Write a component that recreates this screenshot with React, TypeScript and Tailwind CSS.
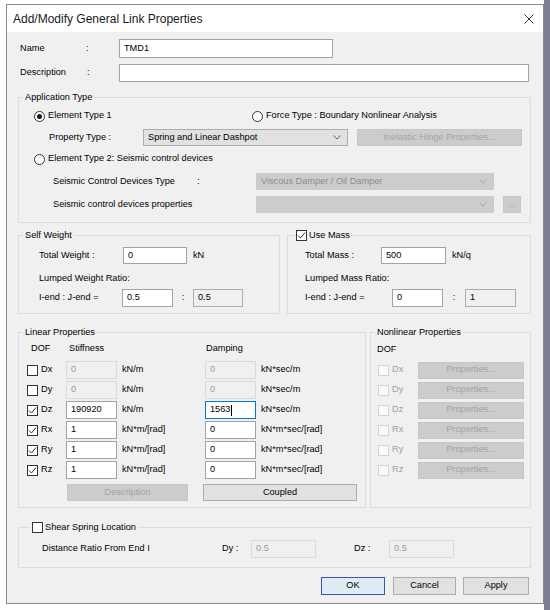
import React from 'react';

type BoxKind = 'normal' | 'readonly' | 'disabled' | 'focus';

function TextBox({ value, className, kind = 'normal' }: { value?: string; className: string; kind?: BoxKind }) {
  const look = {
    normal: 'border-[#a3a3a3] bg-white text-black',
    readonly: 'border-[#adadad] bg-[#f0f0f0] text-black',
    disabled: 'border-[#dadada] bg-[#f0f0f0] text-[#9a9a9a]',
    focus: 'border-[#0078d7] bg-white text-black',
  }[kind];
  return (
    <div className={`flex shrink-0 items-center border px-[4px] ${look} ${className}`}>
      {value}
      {kind === 'focus' && <span className="ml-px h-[11px] w-px bg-black" />}
    </div>
  );
}

function Btn({
  label,
  className,
  disabled,
  primary,
}: {
  label: string;
  className: string;
  disabled?: boolean;
  primary?: boolean;
}) {
  const look = disabled
    ? 'border-[#c6c6c6] bg-[#cccccc] text-[#a4a4a4]'
    : primary
      ? 'border-[#3a55b4] bg-[#e0ecf3] text-black'
      : 'border-[#adadad] bg-[#e1e1e1] text-black';
  return (
    <button type="button" className={`flex shrink-0 items-center justify-center border ${look} ${className}`}>
      {label}
    </button>
  );
}

function Chevron({ disabled }: { disabled?: boolean }) {
  return (
    <svg width="8" height="5" viewBox="0 0 8 5" className="shrink-0">
      <polyline
        points="0.5,0.5 4,4 7.5,0.5"
        fill="none"
        stroke={disabled ? '#a9a9a9' : '#606060'}
        strokeWidth="1"
      />
    </svg>
  );
}

function Combo({ value, className, disabled }: { value?: string; className: string; disabled?: boolean }) {
  return (
    <div
      className={`flex shrink-0 items-center justify-between border pl-[4px] pr-[6px] ${
        disabled ? 'border-[#cccccc] bg-[#cccccc] text-[#8c8c8c]' : 'border-[#adadad] bg-[#e1e1e1] text-black'
      } ${className}`}
    >
      <span>{value}</span>
      <Chevron disabled={disabled} />
    </div>
  );
}

function Check({ checked, disabled }: { checked?: boolean; disabled?: boolean }) {
  return (
    <span
      className={`flex h-[11px] w-[11px] shrink-0 items-center justify-center border ${
        disabled ? 'border-[#d3d3d3] bg-[#fafafa]' : 'border-[#333333] bg-white'
      }`}
    >
      {checked && (
        <svg width="9" height="9" viewBox="0 0 9 9">
          <polyline points="1,4.5 3.5,7 8,1.5" fill="none" stroke="#333333" strokeWidth="1" />
        </svg>
      )}
    </span>
  );
}

function Radio({ checked }: { checked?: boolean }) {
  return (
    <span className="flex h-[11px] w-[11px] shrink-0 items-center justify-center rounded-full border border-[#333333] bg-white">
      {checked && <span className="h-[5px] w-[5px] rounded-full bg-[#1a1a1a]" />}
    </span>
  );
}

function GroupBox({
  title,
  className,
  legendClass = 'ml-[4px] px-[2px]',
  children,
}: {
  title: React.ReactNode;
  className: string;
  legendClass?: string;
  children: React.ReactNode;
}) {
  return (
    <fieldset className={`flex min-w-0 flex-col border border-[#dcdcdc] ${className}`}>
      <legend className={`leading-[12px] ${legendClass}`}>{title}</legend>
      {children}
    </fieldset>
  );
}

const linearRows = [
  { dof: 'Dx', on: false, k: '0', c: '0', ku: 'kN/m', cu: 'kN*sec/m' },
  { dof: 'Dy', on: false, k: '0', c: '0', ku: 'kN/m', cu: 'kN*sec/m' },
  { dof: 'Dz', on: true, k: '190920', c: '1563', ku: 'kN/m', cu: 'kN*sec/m', focus: true },
  { dof: 'Rx', on: true, k: '1', c: '0', ku: 'kN*m/[rad]', cu: 'kN*m*sec/[rad]' },
  { dof: 'Ry', on: true, k: '1', c: '0', ku: 'kN*m/[rad]', cu: 'kN*m*sec/[rad]' },
  { dof: 'Rz', on: true, k: '1', c: '0', ku: 'kN*m/[rad]', cu: 'kN*m*sec/[rad]' },
];

export default function App() {
  return (
    <div className="flex h-[610px] w-[550px] overflow-hidden bg-white font-['Liberation_Sans',Arial,sans-serif] text-[9.2px] leading-none text-black">
      <div className="ml-[6px] mt-[4px] flex h-[600px] w-[538px] shrink-0 flex-col border border-[#8a8a8a] bg-[#f0f0f0]">
        {/* title bar */}
        <div className="flex h-[27px] shrink-0 items-center justify-between bg-white pl-[6px] pr-[9px]">
          <span className="text-[12px] text-[#1a1a1a]">Add/Modify General Link Properties</span>
          <svg width="10" height="10" viewBox="0 0 10 10">
            <path d="M0.5 0.5 L9.5 9.5 M9.5 0.5 L0.5 9.5" stroke="#333333" strokeWidth="1" />
          </svg>
        </div>

        <div className="flex flex-col pl-[11px] pr-[12px]">
          {/* name / description */}
          <div className="mt-[7px] flex h-[19px] items-center">
            <span className="w-[68px] pl-[2px]">Name</span>
            <span className="w-[33px]">:</span>
            <TextBox value="TMD1" className="h-[19px] w-[214px]" />
          </div>
          <div className="mt-[6px] flex h-[18px] items-center">
            <span className="w-[68px] pl-[2px]">Description</span>
            <span className="w-[33px] pl-px">:</span>
            <TextBox className="h-[18px] w-[410px]" />
          </div>

          {/* application type */}
          <GroupBox title="Application Type" className="mt-[9px] pb-[9px]">
            <div className="mt-[5px] flex h-[16px] items-center pl-[15px]">
              <span className="flex w-[218px] items-center gap-[3px]">
                <Radio checked />
                Element Type 1
              </span>
              <span className="flex items-center gap-[3px]">
                <Radio />
                Force Type : Boundary Nonlinear Analysis
              </span>
            </div>
            <div className="mt-[5px] flex h-[17px] items-center pl-[30px]">
              <span className="w-[94px]">Property Type :</span>
              <Combo value="Spring and Linear Dashpot" className="h-[17px] w-[205px]" />
              <Btn label="Inelastic Hinge Properties..." disabled className="ml-[9px] h-[17px] w-[165px]" />
            </div>
            <div className="mt-[5px] flex h-[16px] items-center gap-[3px] pl-[15px]">
              <Radio />
              Element Type 2: Seismic control devices
            </div>
            <div className="mt-[6px] flex h-[17px] items-center pl-[34px]">
              <span className="w-[144px]">Seismic Control Devices Type</span>
              <span className="w-[59px]">:</span>
              <Combo value="Viscous Damper / Oil Damper" disabled className="h-[17px] w-[238px]" />
            </div>
            <div className="mt-[6px] flex h-[17px] items-center pl-[34px]">
              <span className="w-[203px]">Seismic control devices properties</span>
              <Combo disabled className="h-[17px] w-[238px]" />
              <Btn label="..." disabled className="ml-[9px] h-[17px] w-[18px]" />
            </div>
          </GroupBox>

          {/* weight / mass */}
          <div className="mt-[6px] flex gap-[7px]">
            <GroupBox title="Self Weight" className="w-[262px] pb-[6px]">
              <div className="mt-[6px] flex h-[17px] items-center pl-[20px]">
                <span className="w-[84px]">Total Weight :</span>
                <TextBox value="0" className="h-[17px] w-[64px]" />
                <span className="ml-[6px]">kN</span>
              </div>
              <div className="mt-[9px] flex h-[12px] items-center pl-[20px]">Lumped Weight Ratio:</div>
              <div className="mt-[4px] flex h-[18px] items-center pl-[20px]">
                <span className="w-[83px]">I-end : J-end =</span>
                <TextBox value="0.5" className="h-[18px] w-[51px]" />
                <span className="w-[20px] text-center">:</span>
                <TextBox value="0.5" kind="readonly" className="h-[18px] w-[50px]" />
              </div>
            </GroupBox>
            <GroupBox
              title={
                <span className="flex h-[12px] items-center gap-[2px]">
                  <Check checked />
                  Use Mass
                </span>
              }
              legendClass="ml-[7px] px-px"
              className="w-[244px] pb-[6px]"
            >
              <div className="mt-[6px] flex h-[17px] items-center pl-[17px]">
                <span className="w-[76px]">Total Mass :</span>
                <TextBox value="500" className="h-[17px] w-[65px]" />
                <span className="ml-[6px]">kN/q</span>
              </div>
              <div className="mt-[9px] flex h-[12px] items-center pl-[17px]">Lumped Mass Ratio:</div>
              <div className="mt-[4px] flex h-[18px] items-center pl-[17px]">
                <span className="w-[87px]">I-end : J-end =</span>
                <TextBox value="0" className="h-[18px] w-[51px]" />
                <span className="w-[22px] text-center">:</span>
                <TextBox value="1" kind="readonly" className="h-[18px] w-[51px]" />
              </div>
            </GroupBox>
          </div>

          {/* linear / nonlinear */}
          <div className="mt-[12px] flex gap-[4px]">
            <GroupBox title="Linear Properties" className="w-[348px] pb-[6px]">
              <div className="mt-[5px] flex h-[12px] items-center pl-[12px]">
                <span className="w-[38px]">DOF</span>
                <span className="w-[137px]">Stiffness</span>
                <span>Damping</span>
              </div>
              <div className="mt-[6px] flex flex-col gap-[2px]">
                {linearRows.map((r) => (
                  <div key={r.dof} className="flex h-[18px] items-center pl-[8px]">
                    <Check checked={r.on} />
                    <span className="ml-[3px] w-[25px]">{r.dof}</span>
                    <TextBox value={r.k} kind={r.on ? 'normal' : 'disabled'} className="h-[18px] w-[51px]" />
                    <span className="w-[88px] pl-[5px]">{r.ku}</span>
                    <TextBox
                      value={r.c}
                      kind={r.focus ? 'focus' : r.on ? 'normal' : 'disabled'}
                      className="h-[18px] w-[51px]"
                    />
                    <span className="pl-[5px]">{r.cu}</span>
                  </div>
                ))}
              </div>
              <div className="mt-[5px] flex h-[17px] items-center pl-[48px]">
                <Btn label="Description" disabled className="h-[17px] w-[121px]" />
                <Btn label="Coupled" className="ml-[15px] h-[17px] w-[154px]" />
              </div>
            </GroupBox>
            <GroupBox title="Nonlinear Properties" className="flex-1 pb-[6px]">
              <div className="mt-[6px] flex h-[12px] items-center pl-[6px]">DOF</div>
              <div className="mt-[5px] flex flex-col gap-[2px]">
                {linearRows.map((r) => (
                  <div key={r.dof} className="flex h-[18px] items-center pl-[7px] text-[#a0a0a0]">
                    <Check disabled />
                    <span className="ml-[3px] w-[26px]">{r.dof}</span>
                    <Btn label="Properties..." disabled className="h-[17px] w-[106px]" />
                  </div>
                ))}
              </div>
            </GroupBox>
          </div>

          {/* shear spring */}
          <GroupBox
            title={
              <span className="flex h-[12px] items-center gap-[2px]">
                <Check />
                Shear Spring Location
              </span>
            }
            legendClass="ml-[11px] px-[2px]"
            className="mt-[13px] pb-[9px]"
          >
            <div className="mt-[7px] flex h-[18px] items-center pl-[23px]">
              <span className="w-[180px]">Distance Ratio From End I</span>
              <span className="w-[29px]">Dy :</span>
              <TextBox value="0.5" kind="disabled" className="h-[18px] w-[65px]" />
              <span className="ml-[38px] w-[35px]">Dz :</span>
              <TextBox value="0.5" kind="disabled" className="h-[18px] w-[65px]" />
            </div>
          </GroupBox>

          {/* dialog buttons */}
          <div className="mt-[9px] flex h-[18px] items-center justify-end gap-[7px] pr-[2px]">
            <Btn label="OK" primary className="mr-px h-[18px] w-[64px]" />
            <Btn label="Cancel" className="h-[18px] w-[63px]" />
            <Btn label="Apply" className="h-[18px] w-[66px]" />
          </div>
        </div>
      </div>
      <div className="h-full flex-1 bg-[#7c7e95]" />
    </div>
  );
}
